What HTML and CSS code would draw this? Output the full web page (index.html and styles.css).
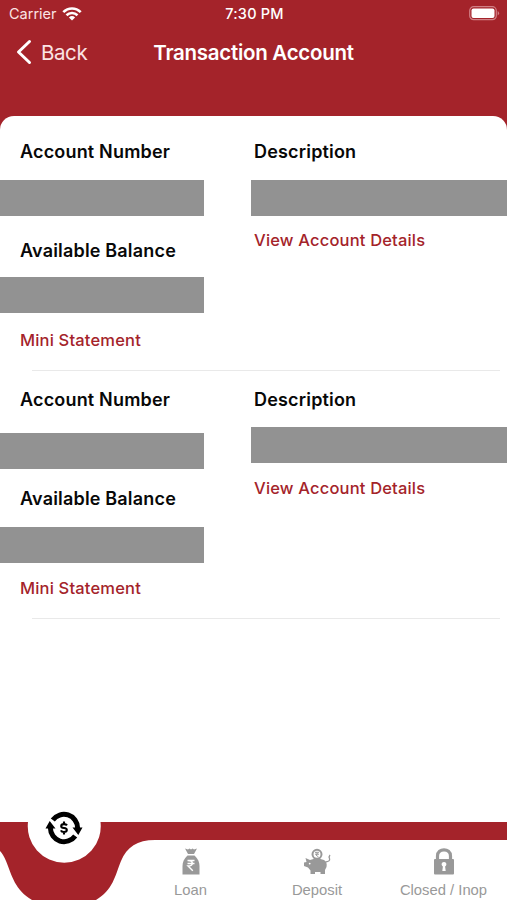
FILE: index.html
```
<!DOCTYPE html>
<html lang="en">
<head>
<meta charset="utf-8">
<title>Transaction Account</title>
<link rel="stylesheet" href="styles.css">
</head>
<body>
<div class="screen">
  <header class="header">
    <div class="status">
      <div class="carrier"><span>Carrier</span>
        <svg width="20" height="14" viewBox="0 0 20 14" fill="none" stroke="#fff" stroke-width="2.600"><path d="M1.300 5.200C6.200.2 13.800.2 18.700 5.200M4.500 8.300C7.600 5.300 12.400 5.300 15.500 8.300"/><path d="M10 13.500 6.900 10.400Q10 7.700 13.100 10.400Z" fill="#fff" stroke="none"/></svg>
      </div>
      <span class="time">7:30 PM</span>
      <svg class="battery" width="31" height="15" viewBox="0 0 31 15"><rect x=".7" y=".7" width="26.600" height="13" rx="4" fill="none" stroke="#d07f85" stroke-width="1.200"/><rect x="2.500" y="2.500" width="23" height="9.400" rx="2" fill="#fff"/><path d="M28.700 5Q31.500 7.200 28.700 9.500Z" fill="#d07f85"/></svg>
    </div>
    <nav class="nav">
      <a class="back"><svg width="16" height="26" viewBox="0 0 16 26" fill="none" stroke="#fff" stroke-width="3" stroke-linecap="round" stroke-linejoin="round"><path d="M13.500 2.500 2.500 13 13.500 23.500"/></svg><span>Back</span></a>
      <h1>Transaction Account</h1>
      <span></span>
    </nav>
  </header>
  <main class="card">
    <section class="account">
      <div class="col">
        <h2 class="number">Account Number</h2><div class="mask"></div>
        <h2 class="available">Available Balance</h2><div class="mask"></div>
        <a class="link mini">Mini Statement</a>
      </div>
      <div class="col right">
        <h2 class="desc">Description</h2><div class="mask"></div>
        <a class="link details">View Account Details</a>
      </div>
    </section>
    <section class="account second">
      <div class="col">
        <h2 class="number">Account Number</h2><div class="mask"></div>
        <h2 class="available">Available Balance</h2><div class="mask"></div>
        <a class="link mini">Mini Statement</a>
      </div>
      <div class="col right">
        <h2 class="desc">Description</h2><div class="mask"></div>
        <a class="link details">View Account Details</a>
      </div>
    </section>
  </main>
  <footer class="tabs">
    <svg class="curve" width="507" height="100" viewBox="0 0 507 100">
      <path d="M0 22H28A36.500 36.500 0 1 0 100.500 22H507V40H155C137 40 127 47 121 61C115 76 113 90 96 100H32C15 90 12 76 6 61Q3 54 0 51Z" fill="#a4232a"/>
      <g transform="translate(64 28)" fill="none" stroke="#000" stroke-width="5">
        <path d="M-11.200-8A13.700 13.700 0 0 1 13.600 0M11.200 8A13.700 13.700 0 0 1-13.600 0"/>
        <path d="M8.500-.5H18.500L14.300 7ZM-8.500 .5H-18.500L-14.300-7Z" fill="#000" stroke="none"/>
        <path d="M3-2.600Q2.200-3.900 0-3.900Q-2.800-3.900-2.800-1.800Q-2.800-.3 0 0Q2.800 .3 2.800 2Q2.800 4-.1 4Q-2.400 4-3.100 2.400M0-6.400V-3.500M0 3.500V6.400" stroke-width="2.100"/>
      </g>
    </svg>
    <div class="tab-list">
      <span></span>
      <a class="tab"><svg width="20" height="28" viewBox="0 0 20 28"><path d="M4 .5 7 1.500 8.500.5 10 1.500 11.500.5 13 1.500 16 .5 13 6H7Z" fill="#999"/><path d="M6.500 7.500H13.500C17 11 18.500 14 18.500 18V26.500H1.500V18C1.500 14 3 11 6.500 7.500Z" fill="#999"/><path d="M6.500 12.500H13.500M6.500 15.500H13.500M7 12.500C12.800 12.500 12.800 18 7 18L11.800 22.800" fill="none" stroke="#fff" stroke-width="1.400"/></svg><span>Loan</span></a>
      <a class="tab"><svg width="28" height="28" viewBox="0 0 28 28"><circle cx="14" cy="6.300" r="4.500" fill="none" stroke="#999" stroke-width="2"/><path d="M12 4.300H16M12 6.200H16M13 4.300Q16 6.300 13 7L15.500 9" fill="none" stroke="#999"/><path d="M2.500 10 7 12Q14 9.500 21 12Q24.500 14 23.500 19L22 22V26H17.500V24H12V26H7.500V22.500L5 19.500 1 18V14.500L3.500 14Z" fill="#999"/><path d="M22.500 14Q27.500 13.500 26.500 10.500Q25.500 9 27 7" fill="none" stroke="#999" stroke-width="1.300"/><circle cx="6.700" cy="15.600" r=".9" fill="#fff"/></svg><span>Deposit</span></a>
      <a class="tab"><svg width="22" height="28" viewBox="0 0 22 28"><path d="M4.500 12V8C4.500-.3 17.500-.3 17.500 8V12" fill="none" stroke="#999" stroke-width="3.200"/><rect x="1" y="11" width="20" height="15.500" rx="1" fill="#999"/><path d="M9.900 18.500A2.400 2.400 0 1 1 12.100 18.500L12.700 23H9.300Z" fill="#fff"/></svg><span>Closed / Inop</span></a>
    </div>
  </footer>
</div>
</body>
</html>
```

FILE: styles.css
```
* { box-sizing: border-box; }
body { margin: 0; font-family: Inter, "Liberation Sans", sans-serif; }
.screen {
  width: 507px;
  height: 900px;
  display: flex;
  flex-direction: column;
  overflow: hidden;
  background: #a4232a;
}
.header { height: 116px; flex: none; color: #fff; }
.status {
  height: 27px;
  padding: 0 7px 0 9px;
  display: grid;
  grid-template-columns: 1fr auto 1fr;
  align-items: center;
  font-size: 14.5px;
}
.carrier { display: flex; align-items: center; gap: 5px; color: #fbe3e4; }
.time { font-weight: 500; letter-spacing: .2px; }
.battery { justify-self: end; }
.nav {
  height: 50px;
  padding: 0 16px;
  display: grid;
  grid-template-columns: 1fr auto 1fr;
  align-items: center;
}
.back { display: flex; align-items: center; gap: 9px; font-size: 20.5px; letter-spacing: -.4px; color: #fbe3e4; }
.nav h1 { margin: 0; font-size: 20.5px; font-weight: 600; letter-spacing: -.28px; }
.card {
  height: 706px;
  flex: none;
  padding-top: 6px;
  background: #fff;
  border-radius: 14px 14px 0 0;
}
.account {
  height: 248.5px;
  display: grid;
  grid-template-columns: 204px 1fr;
  column-gap: 47px;
  background: linear-gradient(#e9e9e9, #e9e9e9) 32px 247.500px / 468px 1px no-repeat;
}
.col { display: flex; flex-direction: column; padding-top: 18px; }
.second .col { padding-top: 17.500px; }
.col h2, .link { height: 24px; margin: 0 0 0 20px; line-height: 24px; white-space: nowrap; }
.col h2 { font-size: 18px; font-weight: 600; letter-spacing: .18px; color: #080808; }
.link { font-size: 16.500px; font-weight: 500; letter-spacing: .18px; color: #a4232a; }
.right h2, .right .link { margin-left: 3px; }
.mask { height: 36px; margin-top: 16px; background: #929292; }
.col .available { margin-top: 22.500px; }
.available + .mask { margin-top: 14px; }
.mini { margin-top: 15px; }
.details { margin-top: 11.500px; }
.second .number + .mask { margin-top: 21px; }
.second .available { margin-top: 18px; }
.second .available + .mask { margin-top: 16px; }
.second .mini { margin-top: 13px; }
.second .desc + .mask { margin-top: 14.500px; }
.second .details { margin-top: 13.500px; }
.tabs { position: relative; height: 78px; flex: none; background: #fff; }
.curve { position: absolute; left: 0; top: -22px; }
.tab-list {
  position: relative;
  height: 78px;
  padding-top: 26px;
  display: grid;
  grid-template-columns: 127px 127px 126px 127px;
}
.tab {
  display: flex;
  flex-direction: column;
  align-items: center;
  gap: 5px;
  font: 14.800px/18px "Liberation Sans", Arial, sans-serif;
  color: #999;
}
```
